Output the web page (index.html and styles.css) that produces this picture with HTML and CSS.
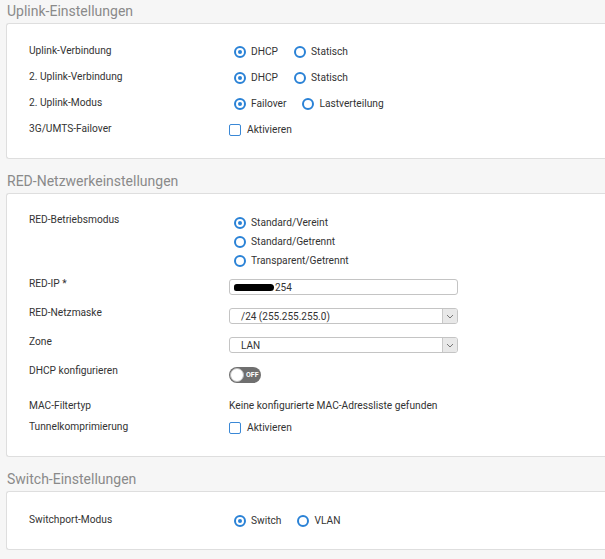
FILE: index.html
```html
<!DOCTYPE html>
<html lang="de">
<head>
<meta charset="utf-8">
<link rel="stylesheet" href="styles.css">
</head>
<body>
<h2 class="sec-title">Uplink-Einstellungen</h2>
<section class="panel p1">
  <div class="row r26"><div class="label">Uplink-Verbindung</div><div class="ctrl radios"><span class="radio on"></span><span class="opt">DHCP</span><span class="radio"></span><span class="opt">Statisch</span></div></div>
  <div class="row r26"><div class="label">2. Uplink-Verbindung</div><div class="ctrl radios"><span class="radio on"></span><span class="opt">DHCP</span><span class="radio"></span><span class="opt">Statisch</span></div></div>
  <div class="row r26"><div class="label">2. Uplink-Modus</div><div class="ctrl radios"><span class="radio on"></span><span class="opt">Failover</span><span class="radio"></span><span class="opt">Lastverteilung</span></div></div>
  <div class="row r26"><div class="label">3G/UMTS-Failover</div><div class="ctrl checks"><span class="check"></span><span class="opt">Aktivieren</span></div></div>
</section>

<h2 class="sec-title">RED-Netzwerkeinstellungen</h2>
<section class="panel p2">
  <div class="row top"><div class="label lbl-radio">RED-Betriebsmodus</div>
    <div class="ctrl vradios">
      <div class="vr"><span class="radio on"></span><span class="opt">Standard/Vereint</span></div>
      <div class="vr"><span class="radio"></span><span class="opt">Standard/Getrennt</span></div>
      <div class="vr"><span class="radio"></span><span class="opt">Transparent/Getrennt</span></div>
    </div>
  </div>
  <div class="row top r29 first-input"><div class="label lbl-input">RED-IP *</div><div class="ctrl"><div class="input"><span class="redact"></span>254</div></div></div>
  <div class="row top r29"><div class="label lbl-input">RED-Netzmaske</div><div class="ctrl"><div class="select"><span class="sel-text">/24 (255.255.255.0)</span><span class="sel-arrow"><svg width="8" height="5" viewBox="0 0 8 5"><path d="M1 1l3 3 3-3" fill="none" stroke="#777" stroke-width="1"/></svg></span></div></div></div>
  <div class="row top r29"><div class="label lbl-input">Zone</div><div class="ctrl"><div class="select"><span class="sel-text">LAN</span><span class="sel-arrow"><svg width="8" height="5" viewBox="0 0 8 5"><path d="M1 1l3 3 3-3" fill="none" stroke="#777" stroke-width="1"/></svg></span></div></div></div>
  <div class="row top r29"><div class="label lbl-input">DHCP konfigurieren</div><div class="ctrl"><div class="toggle"><span class="knob"></span><span class="toggle-text">OFF</span></div></div></div>
  <div class="row r20"><div class="label">MAC-Filtertyp</div><div class="ctrl text">Keine konfigurierte MAC-Adressliste gefunden</div></div>
  <div class="row r22"><div class="label">Tunnelkomprimierung</div><div class="ctrl checks"><span class="check"></span><span class="opt">Aktivieren</span></div></div>
</section>

<h2 class="sec-title">Switch-Einstellungen</h2>
<section class="panel p3">
  <div class="row r26"><div class="label">Switchport-Modus</div><div class="ctrl radios"><span class="radio on"></span><span class="opt">Switch</span><span class="radio"></span><span class="opt">VLAN</span></div></div>
</section>
</body>
</html>
```

FILE: styles.css
```css
* { box-sizing: border-box; }
html, body { margin: 0; padding: 0; }
body {
  background: #f6f6f6;
  font-family: Roboto, "Liberation Sans", sans-serif;
  font-size: 10.2px;
  color: #333;
  padding-left: 6px;
  overflow: hidden;
  height: 559px;
}
.sec-title {
  margin: 0;
  height: 23px;
  padding-top: 2px;
  padding-left: 1px;
  font-size: 14px;
  font-weight: 400;
  color: #8a8a8a;
  line-height: 18px;
}
.panel {
  background: #fff;
  border: 1px solid #dedede;
  border-right: none;
  border-radius: 3px 0 0 3px;
  margin-right: -2px;
  padding-left: 22px;
  margin-bottom: 11px;
}
.p1 { padding-top: 13px; padding-bottom: 17px; }
.p2 { padding-top: 19px; padding-bottom: 19px; }
.p3 { padding-top: 14px; padding-bottom: 17px; }
.row { display: flex; align-items: center; }
.row.top { align-items: flex-start; }
.r26 { height: 26px; }
.r29 { height: 29px; }
.r20 { height: 20px; }
.r22 { height: 22px; }
.label { width: 200px; flex: none; }
.lbl-radio { line-height: 19px; margin-top: -3px; }
.lbl-input { line-height: 15px; margin-top: -3px; }
.first-input { margin-top: 9px; }
.ctrl { display: flex; align-items: center; }
.radios { padding-left: 5px; padding-top: 3px; }
.checks { padding-top: 3px; }
.radio {
  width: 12px; height: 12px;
  border: 2px solid #2a82d6;
  border-radius: 50%;
  flex: none;
  display: inline-flex;
  align-items: center;
  justify-content: center;
  margin-right: 5px;
}
.radio.on::after {
  content: "";
  width: 4px; height: 4px;
  border-radius: 50%;
  background: #2a82d6;
}
.opt { margin-right: 16px; }
.check {
  width: 12px; height: 12px;
  border: 1.5px solid #3a88d6;
  border-radius: 2px;
  margin-right: 6px;
  flex: none;
}
.vradios { flex-direction: column; align-items: flex-start; padding-left: 5px; }
.vr { display: flex; align-items: center; height: 19px; }
.input, .select {
  width: 229px;
  height: 16px;
  border: 1px solid #c4c4c4;
  border-radius: 3px;
  background: #fff;
  display: flex;
  align-items: center;
  font-size: 10px;
  color: #333;
}
.input { padding-left: 4px; }
.redact {
  display: inline-block;
  width: 40px; height: 7px;
  background: #000;
  border-radius: 4px 5px 5px 3px;
  margin-right: 1px;
}
.sel-text { flex: 1; padding-left: 11px; }
.sel-arrow {
  width: 15px; height: 14px;
  background: #e8e8e8;
  border-left: 1px solid #c8c8c8;
  border-radius: 0 2px 2px 0;
  display: flex; align-items: center; justify-content: center;
}
.toggle {
  margin-top: 1px;
  width: 32px; height: 16px;
  background: #6f6f6f;
  border-radius: 8px;
  position: relative;
  display: flex; align-items: center;
}
.knob {
  width: 14px; height: 14px;
  background: #fff;
  border-radius: 50%;
  margin-left: 1px;
  border: 1px solid #bbb;
}
.toggle-text { color: #fff; font-size: 7px; font-weight: 700; margin-left: 2px; }
.text { color: #333; }
```
